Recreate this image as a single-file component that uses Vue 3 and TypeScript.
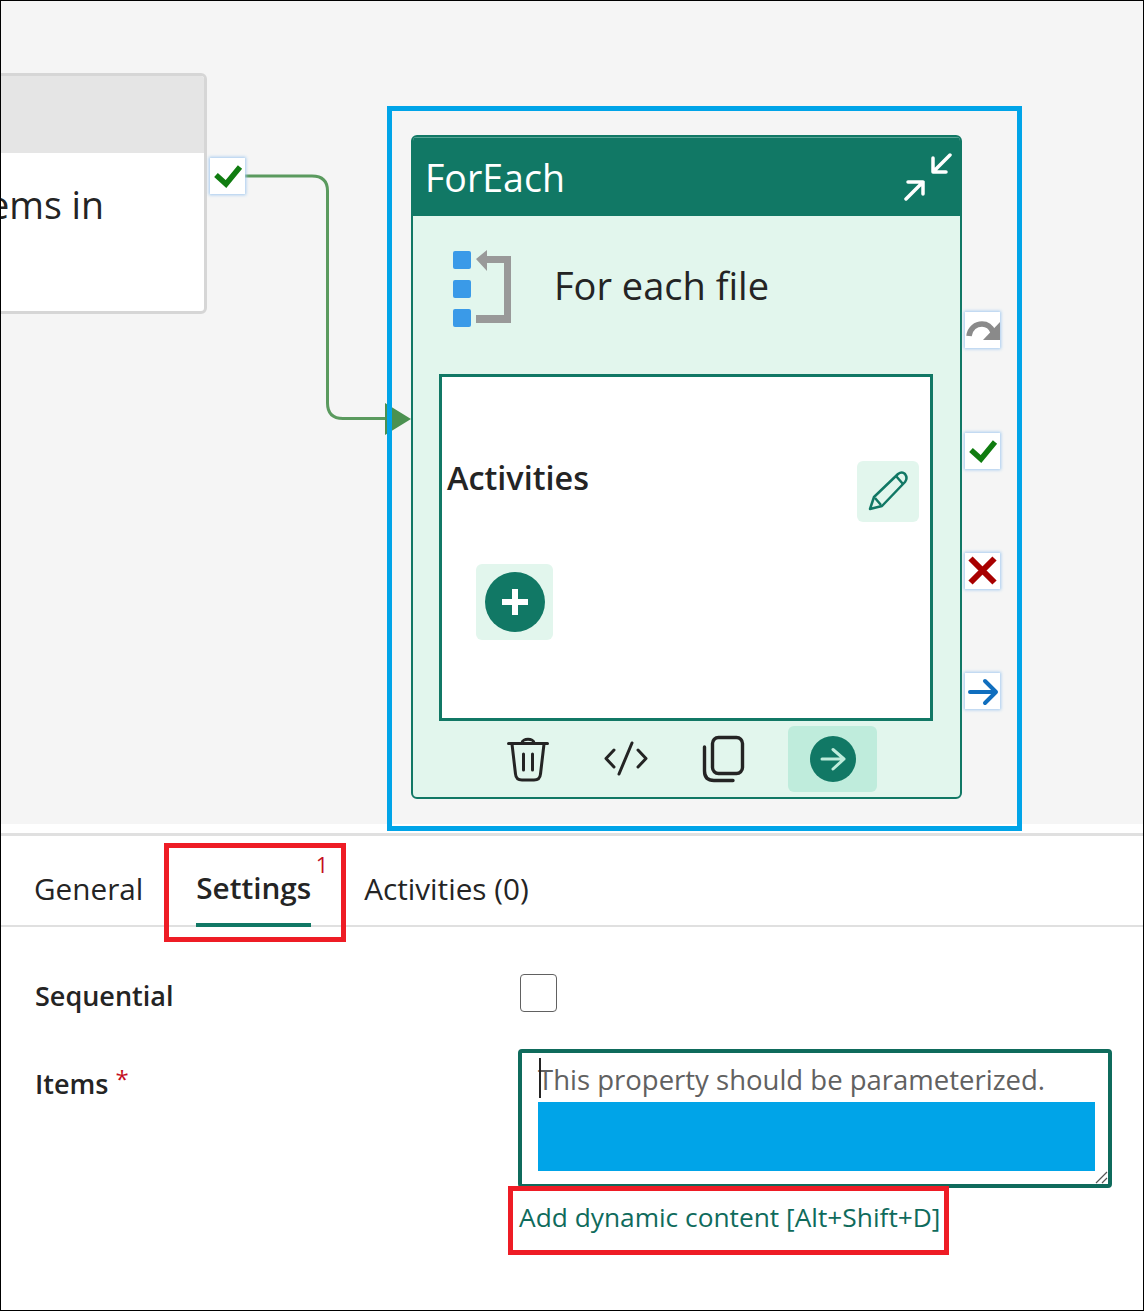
<script setup lang="ts">
interface Tab {
  label: string;
  active?: boolean;
  badge?: string;
}

const tabs: Tab[] = [
  { label: "General" },
  { label: "Settings", active: true, badge: "1" },
  { label: "Activities (0)" },
];
</script>

<template>
  <div class="page">
    <section class="canvas">
      <div class="source-node">
        <div class="source-head"></div>
        <div class="source-body">Items in</div>
      </div>

      <svg class="connector" width="1144" height="823" viewBox="0 0 1144 823">
        <path d="M245 176H312Q327.500 176 327.500 191V403Q327.500 418.500 343 418.500H386" fill="none" stroke="#5a9a5e" stroke-width="3" />
        <path d="M385 403L411 419L385 435Z" fill="#4b9150" />
      </svg>

      <div class="selection"></div>

      <button class="port" style="left: 210px; top: 158px">
        <svg width="34" height="34" viewBox="0 0 34 34"><path d="M5 16L15 25L29 8" fill="none" stroke="#107c10" stroke-width="5.500" /></svg>
      </button>

      <div class="node">
        <header class="node-head">
          <span>ForEach</span>
          <svg width="48" height="48" viewBox="0 0 48 48" fill="none" stroke="#fff" stroke-width="3.500" stroke-linecap="round" stroke-linejoin="round">
            <path d="M46 2L30 18M29 5V19H42" />
            <path d="M2 46L19 29M4 29H19V41" />
          </svg>
        </header>

        <div class="node-title">
          <svg class="loop-icon" width="58" height="78" viewBox="0 0 58 78">
            <rect x="0" y="1" width="18" height="18" rx="2" fill="#3a9ae8" />
            <rect x="0" y="30" width="18" height="18" rx="2" fill="#3a9ae8" />
            <rect x="0" y="59" width="18" height="18" rx="2" fill="#3a9ae8" />
            <path d="M23 9L34 0V6H58V73H23V65H51V13H34V21Z" fill="#999" />
          </svg>
          <span>For each file</span>
        </div>

        <div class="activities">
          <div class="activities-row">
            <strong>Activities</strong>
            <button class="pencil">
              <svg width="62" height="61" viewBox="0 0 62 61" fill="none" stroke="#117865" stroke-width="2.500" stroke-linejoin="round">
                <path d="M13 48L17 36L41 13Q45 10 48 13Q51 17 48 21L25 45Z" />
                <path d="M18 37L24 44M39 15L46 23" />
              </svg>
            </button>
          </div>
          <button class="add">
            <svg width="60" height="60" viewBox="0 0 60 60">
              <circle cx="30" cy="30" r="30" fill="#117865" />
              <path d="M30 17V43M17 30H43" stroke="#fff" stroke-width="6" />
            </svg>
          </button>
        </div>

        <div class="toolbar">
          <button class="tool">
            <svg width="44" height="46" viewBox="0 0 44 46" fill="none" stroke="#242424" stroke-width="3" stroke-linecap="round">
              <path d="M2.500 7.500H41.500M16 7C16 2 28 2 28 7" />
              <path d="M6 8L9.500 38Q10 44 16 44H28Q34 44 34.500 38L38 8" />
              <path d="M17.500 18V34M26.500 18V34" />
            </svg>
          </button>
          <button class="tool">
            <svg width="48" height="36" viewBox="0 0 48 36" fill="none" stroke="#242424" stroke-width="3" stroke-linecap="round" stroke-linejoin="round">
              <path d="M12 9L4 17.500L12 26M30 2L17 33M36 9L44 17.500L36 26" />
            </svg>
          </button>
          <button class="tool copy">
            <svg width="44" height="48" viewBox="0 0 44 48" fill="none" stroke="#242424" stroke-width="3.400" stroke-linecap="round">
              <rect x="11.500" y="2.500" width="30" height="36" rx="6" />
              <path d="M3.500 12V36Q3.500 45.500 13 45.500H32" />
            </svg>
          </button>
          <button class="go">
            <svg width="46" height="46" viewBox="0 0 46 46">
              <circle cx="23" cy="23" r="23" fill="#117865" />
              <path d="M12 23H34M23 13.500L34 23L23 33" fill="none" stroke="#bfecdc" stroke-width="3" stroke-linecap="round" stroke-linejoin="round" />
            </svg>
          </button>
        </div>
      </div>

      <button class="port" style="left: 965px; top: 312px">
        <svg width="34" height="34" viewBox="0 0 34 34">
          <path d="M3 23C4 15 10 11 16 11C21 11 25 14 27 19" fill="none" stroke="#8a8a8a" stroke-width="5.500" />
          <path d="M34 9V27H17Z" fill="#8a8a8a" />
        </svg>
      </button>
      <button class="port" style="left: 965px; top: 433px">
        <svg width="34" height="34" viewBox="0 0 34 34"><path d="M5 16L15 25L29 8" fill="none" stroke="#107c10" stroke-width="5.500" /></svg>
      </button>
      <button class="port" style="left: 965px; top: 553px">
        <svg width="34" height="34" viewBox="0 0 34 34"><path d="M4.500 4.500L28.500 28.500M28.500 4.500L4.500 28.500" fill="none" stroke="#a80000" stroke-width="6" /></svg>
      </button>
      <button class="port" style="left: 965px; top: 673px">
        <svg width="34" height="34" viewBox="0 0 34 34"><path d="M4 18H29M19 7L30 18L19 29" fill="none" stroke="#106ebe" stroke-width="4" stroke-linecap="round" stroke-linejoin="round" /></svg>
      </button>
    </section>

    <section class="panel">
      <nav class="tabs">
        <div v-for="tab in tabs" :key="tab.label" :class="['tab', { active: tab.active }]">
          <span>{{ tab.label }}</span>
          <sup v-if="tab.badge" class="tab-badge">{{ tab.badge }}</sup>
        </div>
      </nav>

      <div class="form">
        <label class="field-label seq-label">Sequential</label>
        <div class="checkbox"></div>

        <label class="field-label items-label">Items <span class="req">*</span></label>
        <div class="items-col">
          <div class="textbox">
            <i class="caret"></i>
            <div class="placeholder">This property should be parameterized.</div>
            <div class="redacted"></div>
            <svg class="grip" width="14" height="14" viewBox="0 0 14 14" fill="none" stroke="#555" stroke-width="1.200">
              <path d="M2 13L13 2M8 13L13 8" />
            </svg>
          </div>
          <a class="dynamic-link">Add dynamic content [Alt+Shift+D]</a>
        </div>
      </div>
    </section>

    <div class="callout settings-callout"></div>
    <div class="callout link-callout"></div>
  </div>
</template>

<style>
html,
body {
  margin: 0;
  background: #fff;
}
</style>

<style scoped>
.page {
  position: relative;
  width: 1144px;
  height: 1311px;
  overflow: hidden;
  background: #fff;
  color: #242424;
  font-family: "Open Sans", "Noto Sans", sans-serif;
}

.page::after {
  content: "";
  position: absolute;
  inset: 0;
  border: 1px solid #000;
  pointer-events: none;
}

button {
  padding: 0;
  border: 0;
  background: none;
  display: flex;
  align-items: center;
  justify-content: center;
}

.canvas {
  position: relative;
  height: 824px;
  background: #f5f5f5;
}

.source-node {
  position: absolute;
  left: -100px;
  top: 73px;
  width: 307px;
  height: 241px;
  box-sizing: border-box;
  border: 3px solid #d6d6d6;
  border-radius: 6px;
  background: #fff;
  overflow: hidden;
}

.source-head {
  height: 77px;
  background: #e5e5e5;
}

.source-body {
  display: flex;
  justify-content: flex-end;
  padding: 27px 100px 0 0;
  font-size: 37.500px;
  line-height: 50px;
}

.connector {
  position: absolute;
  left: 0;
  top: 0;
}

.selection {
  position: absolute;
  left: 387px;
  top: 106px;
  width: 635px;
  height: 725px;
  box-sizing: border-box;
  border: 5px solid #00a4e8;
}

.port {
  position: absolute;
  width: 35px;
  height: 36px;
  box-sizing: border-box;
  background: #fff;
  box-shadow: 0 0 3px 1px #a5cbf0;
}

.node {
  position: absolute;
  left: 411px;
  top: 135px;
  width: 551px;
  height: 664px;
  box-sizing: border-box;
  border: 2px solid #117865;
  border-radius: 6px;
  background: #e2f6ed;
  overflow: hidden;
}

.node-head {
  height: 79px;
  box-sizing: border-box;
  padding: 2px 8px 0 12px;
  display: flex;
  align-items: center;
  justify-content: space-between;
  background: #117865;
  box-shadow: inset 0 1px #5aa596;
  color: #fff;
  font-size: 37.500px;
}

.node-head svg {
  margin-top: -2px;
}

.node-title {
  height: 138px;
  margin-bottom: 20px;
  padding-left: 40px;
  display: flex;
  align-items: center;
  gap: 43px;
  font-size: 38px;
}

.loop-icon {
  margin-top: 8px;
}

.activities {
  height: 347px;
  box-sizing: border-box;
  margin: 0 27px 0 26px;
  border: 3px solid #117865;
  background: #fff;
}

.activities-row {
  margin-top: 84px;
  padding: 0 11px 0 5px;
  display: flex;
  justify-content: space-between;
}

.activities-row strong {
  font-size: 32.400px;
  line-height: 42px;
  font-weight: 600;
  margin-top: -5px;
}

.pencil {
  width: 62px;
  height: 61px;
  border-radius: 6px;
  background: #e2f6ed;
}

.add {
  width: 77px;
  height: 76px;
  margin: 42px 0 0 34px;
  border-radius: 6px;
  background: #e2f6ed;
}

.toolbar {
  height: 76px;
  padding-left: 66px;
  display: flex;
  align-items: center;
}

.tool {
  width: 98px;
  height: 48px;
}

.tool.copy {
  width: 96px;
  margin-right: 17px;
}

.go {
  width: 89px;
  height: 66px;
  border-radius: 6px;
  background: #bfecdc;
}

.panel {
  margin-top: 9px;
  border-top: 3px solid #e0e0e0;
}

.tabs {
  height: 89px;
  padding-left: 34px;
  display: flex;
  gap: 53px;
  border-bottom: 2px solid #e0e0e0;
}

.tab {
  position: relative;
  display: flex;
  align-items: center;
  height: 89px;
  padding-top: 15px;
  box-sizing: border-box;
  font-size: 29.700px;
  white-space: nowrap;
}

.tab.active {
  font-weight: 600;
  height: 91px;
  padding-top: 16px;
  border-bottom: 4px solid #117865;
}

.tab-badge {
  position: absolute;
  top: 14px;
  right: -17px;
  color: #c50f1f;
  font-size: 22px;
  font-weight: 500;
  line-height: 28px;
}

.form {
  margin-top: 47px;
  padding-left: 35px;
  display: grid;
  grid-template-columns: 483px 594px;
  row-gap: 31px;
}

.field-label {
  font-size: 27px;
  font-weight: 600;
  line-height: 40px;
}

.seq-label {
  line-height: 44px;
}

.items-label {
  margin-top: 10px;
}

.req {
  color: #c50f1f;
  font-size: 24px;
  font-weight: 400;
  vertical-align: 6px;
}

.checkbox {
  width: 37px;
  height: 38px;
  margin-left: 2px;
  box-sizing: border-box;
  border: 1.500px solid #616161;
  border-radius: 4px;
}

.textbox {
  position: relative;
  height: 139px;
  box-sizing: border-box;
  padding: 8px 13px 0 16px;
  border: 4px solid #0f6b5c;
  border-radius: 4px;
}

.caret {
  position: absolute;
  left: 17px;
  top: 5px;
  width: 2px;
  height: 40px;
  background: #242424;
}

.placeholder {
  height: 41px;
  font-size: 27.500px;
  line-height: 37px;
  color: #616161;
  white-space: nowrap;
}

.redacted {
  height: 69px;
  background: #00a4e8;
}

.grip {
  position: absolute;
  right: 0;
  bottom: 0;
}

.dynamic-link {
  display: block;
  margin: 9px 0 0 1px;
  font-size: 26.300px;
  line-height: 40px;
  color: #0f6b5c;
  white-space: nowrap;
}

.callout {
  position: absolute;
  box-sizing: border-box;
  border: 5px solid #ee1c25;
}

.settings-callout {
  left: 164px;
  top: 843px;
  width: 182px;
  height: 99px;
}

.link-callout {
  left: 508px;
  top: 1186px;
  width: 441px;
  height: 69px;
}
</style>
